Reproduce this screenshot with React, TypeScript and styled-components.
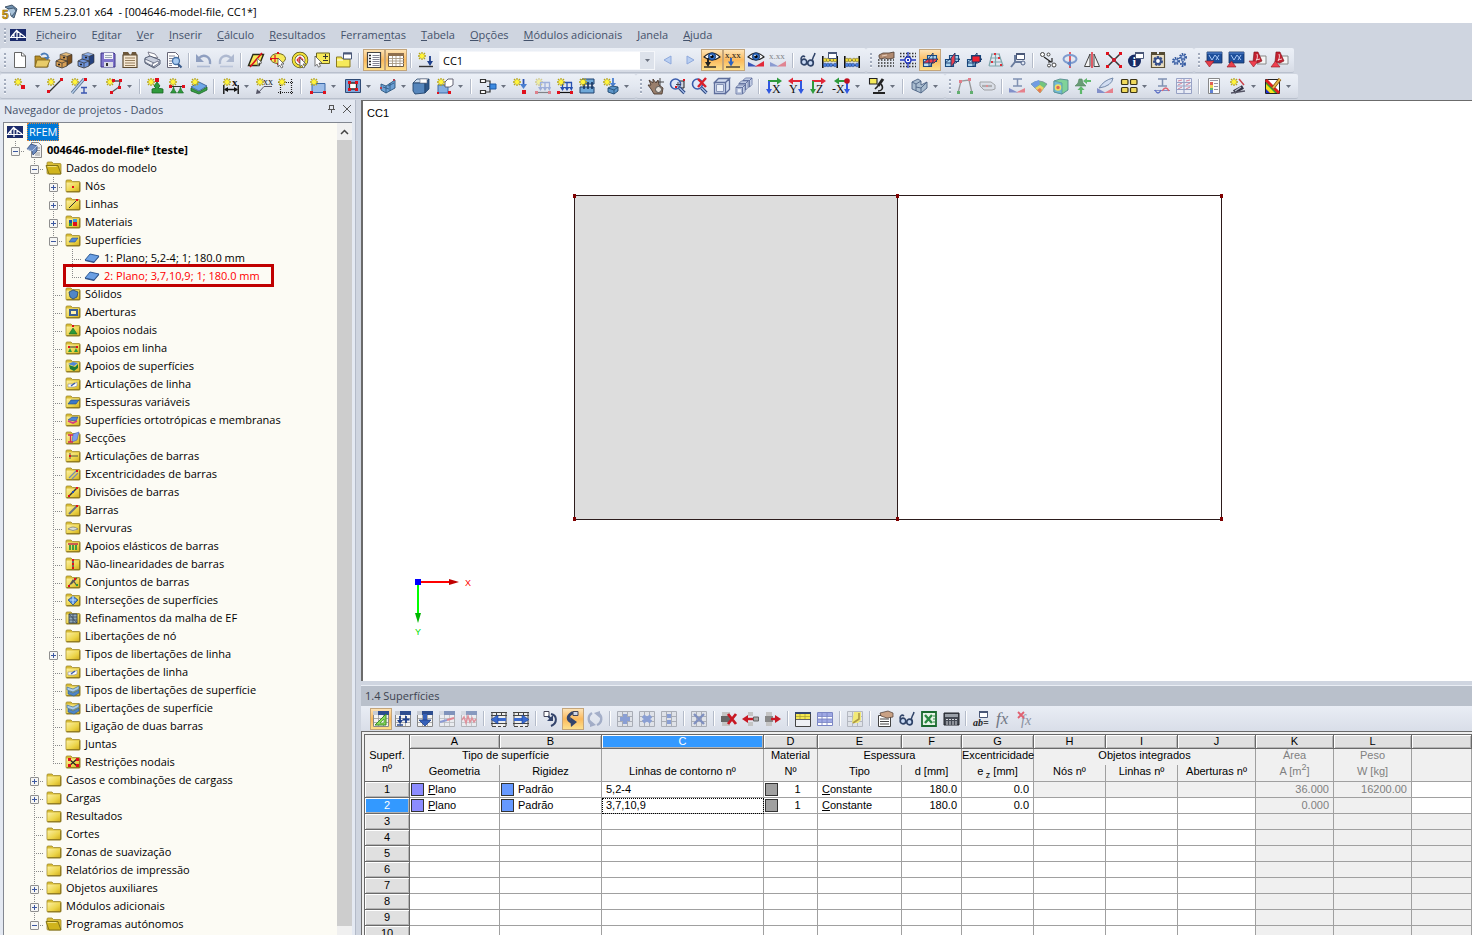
import React, { ReactNode } from 'react';
import styled, { createGlobalStyle, css } from 'styled-components';

const UI_FONT = '"Open Sans", "Noto Sans", sans-serif';
const GRID_FONT = '"Liberation Sans", Arial, sans-serif';
const SERIF = '"Liberation Serif", serif';

const GlobalStyle = createGlobalStyle`
  *, *::before, *::after { box-sizing: border-box; }
  body { margin: 0; background: #cfd5e0; font-family: ${UI_FONT}; font-size: 11px; color: #000; }
  button, select { font: inherit; color: inherit; }
`;

/* ---------- drawing helpers for the 16 x 16 icons ---------- */

const RED = '#e0101c';
const NAVY = '#1d3f8c';
const BLUE = '#4a7fd0';
const GREEN = '#2f9a3c';
const YEL = '#f6ea5a';

const s = (d: string, stroke = '#333', w = 1, fill = 'none') => (
  <path d={d} stroke={stroke} strokeWidth={w} fill={fill} />
);
const f = (d: string, fill: string, stroke = 'none', w = 1) => (
  <path d={d} fill={fill} stroke={stroke} strokeWidth={w} />
);
const dot = (x: number, y: number, c = RED, r = 3) => (
  <rect x={x} y={y} width={r} height={r} fill={c} />
);
const star = (
  <g>
    <path d="M4 0v8M0 4h8M1 1l6 6M7 1L1 7" stroke="#b8a814" strokeWidth="1.3" />
    <circle cx="4" cy="4" r="2.2" fill="#fff43c" />
  </g>
);
const cursor = <path d="M8 6l6 6h-3l2 3-1.500 1-2-3-1.500 2z" fill="#fff" stroke="#555" strokeWidth=".8" />;
const sheet = (
  <g>
    <path d="M.5 1.500h15v14H.5z" fill="#f4f4f4" stroke="#888" />
    <path d="M0 0h5v4H0z" fill="#c8ccd4" />
    <path d="M5 0h11v4H5z" fill="#2d4d8f" />
    <path d="M1 7.500h14M1 11.500h14M5.500 4v11M10.500 4v11" stroke="#999" strokeWidth=".8" />
  </g>
);
const grayGrid = (
  <path d="M.5.500h15v15H.5zM1 5.500h14M1 10.500h14M5.500 1v14M10.500 1v14" fill="#dfe2e8" stroke="#a9adb6" />
);
const cabinet = (top: string, front: string, side: string, drawer: string) => (
  <g>
    {f('M4 2.500l6-2 6 2-5 2z', top, '#555', 0.6)}
    {f('M11 4.500l5-2v8l-5 3z', side, '#333', 0.6)}
    {f('M4 2.500l7 2v9l-7-3z', front, '#555', 0.6)}
    {f('M0 9l4-2 7 2v5l-5 2-6-2z', drawer, '#333', 0.8)}
    {s('M0 9l6 2 5-2M6 11v4.500', '#333', 0.7)}
    {s('M2 12.500h2M7 5.500h2', '#222', 1.3)}
  </g>
);
const axes = (a: string, b: string, flip: boolean, letter: string) => (
  <g>
    {flip ? s('M14 3H3', a, 2) : s('M2 3h11', a, 2)}
    {flip ? f('M0 3l5-3.500v7z', a) : f('M16 3l-5-3.500v7z', a)}
    {flip ? s('M13 3v9', b, 2) : s('M3 3v9', b, 2)}
    {flip ? f('M13 16l-3-5h6z', b) : f('M3 16L0 11h6z', b)}
    <text x={flip ? (letter.length > 1 ? -2 : 1) : 6} y="15" fontFamily={SERIF} fontSize="12" fill="#111">{letter}</text>
  </g>
);
const glasses = (
  <g>
    <circle cx="4" cy="10" r="2.800" fill="#c9daf5" stroke="#2f4368" strokeWidth="1.700" />
    <circle cx="10.500" cy="11" r="2.800" fill="#c9daf5" stroke="#2f4368" strokeWidth="1.700" />
    {s('M1.500 9C0 5 3 3 5 5M13 10C11 6 14 6 15 1', '#2f4368', 1.500)}
  </g>
);
const eye = (
  <g>
    {f('M0 5Q8-3 16 5Q8 11 0 5z', '#fff', '#222', 1.100)}
    <circle cx="8" cy="4.500" r="3.700" fill="#2f6cc4" stroke="#12305f" strokeWidth=".8" />
    <circle cx="8" cy="4.500" r="1.600" fill="#000" />
    <circle cx="7" cy="3.500" r=".8" fill="#fff" />
  </g>
);
const wedge = (
  <g>
    {f('M0 10l9 4.500H0z', '#3a56b8')}
    {f('M16 9v5.500H7z', '#e2293a')}
  </g>
);
const planeBox = (front: string, flat: string, side: string) => (
  <g>
    {f('M5.500 3.500h9v6h-9z', '#a8d4f0', '#1b4b80', 1.100)}
    {f('M1.500 7.500h8v7h-8z', front, '#1b4b80', 1.100)}
    {f('M1 11l5-4h10l-4 4z', flat, '#17386b', 0.900)}
    {f('M7 6l4-5v9l-4 5z', side, '#17386b', 0.900)}
  </g>
);
const abacus = (
  <g>
    {s('M.8 4v12M15.200 4v12', '#111', 1.600)}
    {s('M1 8.500h14M1 13.500h14', '#333', 1)}
    {[3, 6, 10, 13].map((x) => <circle key={x} cx={x} cy="8" r="1.800" fill="#f0dc3c" stroke="#6b5f10" strokeWidth=".5" />)}
    {[3, 6, 9].map((x) => <circle key={x} cx={x} cy="13" r="1.800" fill="#4a7fe0" stroke="#1c3f80" strokeWidth=".5" />)}
    <circle cx="13" cy="13" r="1.800" fill="#4a7fe0" stroke="#1c3f80" strokeWidth=".5" />
  </g>
);
const magnifier = (
  <g>
    <circle cx="5.500" cy="6" r="5" fill="#dfe9fa" stroke="#3a5cac" strokeWidth="1.600" />
    {s('M9.500 10l5 5', '#27427c', 3.200)}
    {s('M9.500 10l5 5', '#a8c0ec', 1.200)}
  </g>
);
const downLoads = (color: string) => (
  <g>
    {s('M5 4.500h10M5.500 4v7M10 4v7M14.500 4v7', color, 1.300)}
    {f('M5.500 13L3 9h5zM10 13L7.500 9h5zM14.500 13L12 9h4z', color)}
    {s('M1 14.500h14', '#111', 1.200)}
    {dot(0, 13)}
    {dot(13, 13)}
  </g>
);
const screen = (
  <g>
    {f('M1 0h15v11H1z', '#1d4f9c', '#16335f', 0.8)}
    {s('M3 3l3 5 3-5M9 3l4 5M13 3l-3 5', '#a7c7f6', 1)}
    {s('M1 1h15', '#5c8ad0')}
  </g>
);
const pdf = (
  <g>
    {f('M7 4h9v8H7z', '#f4f4f4', '#888')}
    {f('M4 0h4l4 9-4 2-5-1z', '#c42030', '#7b1018', 0.6)}
    {s('M6 9c1-2 2-4 1-7M6 8l4-1', '#fff', 0.8)}
  </g>
);
const window_ = (x: number, y: number) => (
  <g transform={`translate(${x} ${y})`}>
    {f('M.5.5h8v6h-8z', '#fff', '#4a5878')}
    {f('M0 0h9v2H0z', '#4a5878')}
  </g>
);
const section = s('M4 1h9M8.500 1v7M4 8h9', '#6f83a8', 1.500);
const cubeWire = (x: number, y: number, k: number) => (
  <g transform={`translate(${x} ${y}) scale(${k})`}>
    {f('M0 4h11v11H0zM0 4l4-4h11l-4 4zM11 15l4-4V0l-4 4z', '#d2dcf0', '#5e6e9c', 1.300)}
    {f('M2 6h7v7H2z', '#e8eef8', '#8794b8', 1)}
  </g>
);
const rowTable = (
  <g>
    {f('M1 1h14v15H1z', '#eee')}
    {s('M0 1.500h16M0 4.500h16M0 12.500h16M1 15.500h4M7 15.500h3M12 15.500h3M1 1v14M5.500 1v3M10.500 1v3M15 1v14', '#444')}
  </g>
);

const ICONS: Record<string, ReactNode> = {
  new: (<>{f('M2.500.5h7.500l3.500 3.500v11.500h-11z', '#fff', '#666')}{s('M9.500.5V4h4', '#666')}</>),
  open: (<>{f('M1 4h5l1 2h7v9H1z', '#b98f25', '#6d5412', 0.8)}{f('M3 8h13l-3 7H1z', '#e8cc6a', '#7b611a', 0.8)}{s('M7 3c3-3 7-1 7 2', '#4a7db8', 1.8)}{f('M10 5h6l-3 3z', '#4a7db8')}</>),
  cabBrown: cabinet('#e3bb7a', '#c8924a', '#7a4e1c', '#d79f55'),
  cabBlue: cabinet('#8fb0ea', '#5d85cf', '#24407e', '#6f95dc'),
  save: (<>{f('M1 1h13l1 1v13H1z', '#8075cc', '#3f3688')}{f('M4 1h9v6H4z', '#f3f3fa')}{f('M4 10h9v5H4z', '#dcdce8')}{f('M6 11h2v3H6z', '#333')}{s('M5 3.500h7M5 5.500h7', '#9aa8b0')}</>),
  clip: (<>{f('M1 3h14v12.500H1z', '#f6e8d2', '#5c4a30', 1.2)}{f('M1 0h5l2 3H1zM10 0h4l1 3h-6z', '#6b563a')}{s('M3 6h10M3 8.500h10M3 11h10M3 13.500h10', '#8b7350', 0.9)}</>),
  print: (<>{f('M4 0l7 2 3 4-8-1z', '#fff', '#667', 0.8)}{f('M1 6l5-2 10 4v4l-6 4-9-5z', '#c9cfdd', '#454f66', 0.9)}{f('M1 7l9 4v4l-9-5z', '#eef0f6', '#454f66', 0.7)}{f('M8 12l6-3 1 2-6 4z', '#fff', '#59617a', 0.8)}</>),
  preview: (<>{f('M1.500.5h8l3 3v12h-11z', '#fff', '#667')}{s('M3 4h6M3 6.500h4M3 9h3M3 11.500h3M3 13.500h3', '#778', 0.9)}<circle cx="10" cy="9" r="3.500" fill="#a9ccf2" stroke="#4672a8" strokeWidth="1.300" />{s('M12 12l3.500 3.500', '#3a5c8c', 2.2)}</>),
  undo: (<>{s('M3 6c5-5 12-1 11 6', '#8f9fc0', 2.4)}{f('M0 2v8h8z', '#8f9fc0')}{s('M1 14.500h13', '#b0bcd4', 1.6)}</>),
  redo: (<>{s('M13 6C8 1 1 5 2 12', '#aeb9d0', 2.4)}{f('M16 2v8H8z', '#aeb9d0')}{s('M2 14.500h13', '#bcc6da', 1.6)}</>),
  selPoly: (<>{f('M5 2.500h10.500l-4.500 11H.5z', YEL, '#2a2a18', 1.4)}{s('M2 15L14 1', RED, 1.6)}{f('M9 6l5 5h-3l-1 3z', '#fff', '#666', 0.7)}</>),
  selEllipse: (<><ellipse cx="8" cy="6.500" rx="7.500" ry="5" fill={YEL} stroke="#6b6420" />{s('M5 3v7M2 6.500h6', RED, 1.2)}{dot(7, 0, RED, 2)}{dot(0, 6, RED, 2)}{dot(7, 11, RED, 2)}{cursor}</>),
  selCircle: (<><circle cx="8" cy="8" r="6.500" fill="#fff" stroke="#4f4a14" strokeWidth="3.500" /><circle cx="8" cy="8" r="6.500" fill="none" stroke="#f2e23c" strokeWidth="2.200" />{s('M8 4.500v7M4.500 8h7', RED, 1.2)}<circle cx="8" cy="8" r="2.500" fill="none" stroke={RED} />{cursor}</>),
  selPm: (<>{f('M2.500 1h13v10.500h-13z', YEL, '#6b6420')}{s('M11.500 2v5M9 4.500h5M9 8.500h5', '#333')}{f('M1 4l7 7-3 .2 1.500 3-2 1-1.500-3-2 2z', '#fff', '#555', 0.8)}</>),
  selWin: (<>{f('M.5 5h5l1 2h7.500v8H.5z', YEL, '#8b7b20')}{s('M1 8h6', '#fff')}{window_(7, 0.5)}</>),
  list: (<>{f('M1.500.5h13v15h-13z', '#fff', '#444', 1.2)}{s('M3 3.500h2M3 6.500h2M3 9.500h2M3 12.500h2', '#222', 1.5)}{s('M6.500 3.500h7M6.500 5.500h7M6.500 7.500h7M6.500 9.500h7M6.500 11.500h7M6.500 13.500h7', '#778', 0.9)}</>),
  tableview: (<>{f('M.5 1.500h15v13H.5z', '#fff', '#6b5a44')}{f('M0 1h16v3H0z', '#8e6f4e')}{s('M1 6.500h15M1 9h15M1 11.500h15M4.500 4v10M8 4v10M12 4v10', '#a89a86', 0.9)}</>),
  newLoad: (<g>{star}{s('M12 4v6', NAVY, 1.8)}{f('M12 14l-3-5h6z', NAVY)}{s('M1 14.500h14', '#333', 1.4)}</g>),
  prev: f('M11 4v8L4 8z', '#b9cff2', '#8fa9dc'),
  next: f('M5 4v8l7-4z', '#b9cff2', '#8fa9dc'),
  eyeLoad: (<>{eye}{s('M4 6v6', '#222', 2)}{f('M4 15L1 10h6z', '#222')}{s('M0 15h12', '#222', 1.4)}</>),
  xxxLoad: (<><text x="-1" y="6" fontSize="9" fontFamily={SERIF} fill="#111">x.xx</text>{s('M5 6v5', '#2f62c0', 2)}{f('M5 14.500l-3-5h6z', '#2f62c0')}{s('M0 15h14', '#222', 1.200)}</>),
  eyeWedge: (<>{eye}{wedge}</>),
  xxxWedge: (<g opacity=".5"><text x="-1" y="7" fontSize="9" fontFamily={SERIF} fill="#111">x.xx</text>{wedge}</g>),
  glasses,
  abacusWin: (<>{abacus}{window_(6, 0)}</>),
  abacus,
  handGrid: (
    <>
      <path d="M0 8h16M0 11h16M0 14h16" stroke="#333" strokeWidth="1.500" strokeDasharray="1.500 1.500" />
      {f('M1 3l4-2 6 0 5-1v6l-6 1-3-1-5 1-1-2z', '#b08a70', '#4b3a30', 0.8)}
      {s('M4 4l5-1', '#e8cdb8', 1.2)}
    </>
  ),
  gridCross: (
    <>
      <path d="M0 1.500h16M0 4.500h16M0 11.500h16M0 14.500h16" stroke="#333" strokeWidth="1.500" strokeDasharray="1.500 1.500" />
      {s('M8 0v16M0 8h16', '#2438c0', 1.3)}
      <circle cx="8" cy="8" r="3" fill="#fff" stroke="#2438c0" strokeWidth="1.300" />
      {dot(7, 7, '#2438c0', 2)}
    </>
  ),
  planeXY: planeBox('#bfe0f5', '#f0384a', 'none'),
  planeYZ: planeBox('#a8d4f0', 'none', '#e84050'),
  planeXZ: (<>{planeBox('#a8d4f0', 'none', 'none')}{f('M6 4h8v6H6z', '#f02030', '#17386b', 0.9)}</>),
  trapGrid: (<>{s('M3 2h9M2 6h11M1.500 10h12M1 14h14M4 2L1 14M7.500 2v12M11 2l4 12', '#7fa6ac', 1.2)}{dot(6, 1, '#d8303a', 2)}{dot(10, 5, '#d8303a', 2)}{dot(3, 9, '#d8303a', 2)}{dot(12, 12, '#d8303a', 2)}</>),
  viewTool: (<>{s('M5 3v7h8M5 10L1 15', '#6a7c9e', 2)}<circle cx="13" cy="11" r="2" fill="#dfe6f2" stroke="#516389" />{window_(6, 1)}</>),
  copyNode: (<><circle cx="2.500" cy="2.500" r="2" fill="#fff" stroke="#444" /><circle cx="8.500" cy="2.500" r="1.500" fill="#fff" stroke="#444" /><circle cx="14" cy="13" r="2" fill="#fff" stroke="#444" /><circle cx="9" cy="13.500" r="1.500" fill="#fff" stroke="#444" />{s('M4 5l7 5M8 10h4V6', '#222', 1.2)}</>),
  rotate: (<>{s('M8 0v16', RED, 1.3)}<ellipse cx="8" cy="7" rx="6.500" ry="4" fill="none" stroke="#7f9ccf" strokeWidth="2" />{f('M9 8v7l-4-3.500z', '#5d82c4')}</>),
  mirror: (<>{s('M8 0v16', RED, 1.3)}{f('M.5 14.500h5.500V2z', '#f4f4f4', '#444')}{f('M15.500 14.500H10V2z', '#f4f4f4', '#444')}</>),
  moveX: (<>{s('M2 2l12 12M14 2L2 14', '#333', 1.5)}{dot(0, 0)}{dot(13, 0)}{dot(0, 13)}{dot(13, 13)}{dot(6, 6, '#c02030', 4)}</>),
  info: (<><circle cx="6.500" cy="9" r="6.500" fill="#182c66" /><text x="4.500" y="14" fontSize="13" fontWeight="bold" fontFamily={SERIF} fill="#fff">i</text>{window_(7, 0)}</>),
  gearWin: (<>{f('M1.500 2.500h13v13h-13z', '#e9dfc4', '#5d5238', 1.2)}{f('M1 0h6v3H1zM9 0h6v3H9z', '#544b34')}<circle cx="8" cy="9" r="3.500" fill="none" stroke="#344d88" strokeWidth="3" strokeDasharray="2 1" /><circle cx="8" cy="9" r="2.800" fill="#fff" stroke="#344d88" strokeWidth="1.800" /></>),
  gears: (<>{[[4, 9, 3], [11, 5, 3], [11, 12, 2]].map(([x, y, r]) => <g key={x * y}><circle cx={x} cy={y} r={r} fill="none" stroke="#345aa0" strokeWidth="2" strokeDasharray="1.500 1" /><circle cx={x} cy={y} r={r - 1} fill="#b8ccf0" stroke="#345aa0" /></g>)}</>),
  screenDown: (<>{screen}{f('M-1 9h9l-4.500 6z', '#e8404c', '#8c1a22', 0.6)}</>),
  screenUp: (<>{screen}{f('M-1 15h9L3.500 9z', '#e8404c', '#8c1a22', 0.6)}</>),
  pdfDown: (<>{pdf}{f('M-1 9h9l-4.500 6z', '#f04050', '#8c1a22', 0.6)}</>),
  pdfUp: (<>{pdf}{f('M-1 15h9L3.500 9z', '#f04050', '#8c1a22', 0.6)}</>),

  node: (<>{star}{dot(7, 7, RED, 4)}</>),
  line: (<>{star}{s('M2 14L14 2', '#333', 1.3)}{dot(0, 12)}{dot(13, 0)}</>),
  member: (<>{star}{s('M1 15L13 1', '#56708f', 3)}{s('M1 15L13 1', '#b4cbe8', 1.4)}{dot(13, 0)}{s('M10 9.500h6M13 9v6M10 15h6', '#3a56b0', 1.4)}</>),
  polyline: (<>{star}{s('M6 3h8l-1 6-7 5', '#555', 1.3)}{dot(6, 1)}{dot(13, 1)}{dot(12, 8)}{dot(4, 13)}</>),
  nodalSupport: (<>{star}{dot(8, 0, RED, 4)}{f('M10 4l3 4-2 2 5 1v4H5v-4l4-1-2-2z', GREEN, '#176422', 0.8)}</>),
  lineSupport: (<>{star}{s('M2 8.500h12', '#333')}{dot(0, 7)}{dot(13, 7)}{f('M4.500 9l1 3 2 3h-6l2-3zM11.500 9l1 3 2 3h-6l2-3z', GREEN, '#176422', 0.6)}</>),
  surfaceSupport: (<>{f('M0 9l8-5 8 4-8 5z', '#6fa8e8', '#2c558e', 0.8)}{f('M0 10l8 4 8-5v3l-8 4-8-3z', '#37a045', '#176422', 0.8)}{star}</>),
  dimension: (<>{s('M.8 7v9M15.200 7v9M2 11.500h12', '#111', 1.4)}{f('M1 11.500l4-2.500v5zM15 11.500l-4-2.500v5z', '#111')}<text x="9" y="8" fontSize="11" fontWeight="bold" fontFamily={SERIF} fill="#111">x</text>{star}</>),
  comment: (<>{s('M2 15L8 8.500h8', '#556')}{f('M0 16l1-5 4 4z', '#556')}<text x="7" y="7" fontSize="10" fontFamily={SERIF} fill="#222">xx</text>{star}</>),
  guide: (<><path d="M2.500 3v13M13.500 1v15M0 4.500h16M0 14.500h16" stroke="#222" strokeWidth="1.200" strokeDasharray="1 1" />{star}</>),
  surface: (<>{f('M2 5.500h13v9H2z', '#9dbde8', '#3b69a8')}{star}{dot(0, 13)}{dot(13, 13)}</>),
  opening: (<>{f('M.5 1.500h15v13H.5z', '#7da4d8', '#2f4b76')}{f('M4.500 5h7v6h-7z', '#fff', '#333', 1.300)}{dot(3, 3)}{dot(10, 3)}{dot(3, 10)}{dot(10, 10)}</>),
  thickSurf: (<>{f('M1 6l5 2 9-6v8l-9 5-5-3z', '#6da0d4', '#2a567e', 0.9)}{s('M6 8v7M10 5v8M3 9l6 2M8 8l6-3', '#2a567e', 0.8)}{dot(0, 9, '#b04050', 2)}{dot(13, 1, '#b04050', 2)}</>),
  solid: (<>{f('M0 5l4-4h12l-3 4z', '#cfdff0', '#2a4468', 0.8)}{f('M0 5h12v10l-10 1-2-3z', '#5686bc', '#22456e', 0.9)}{f('M12 5l4-4v10l-4 4z', '#2f5788', '#22456e', 0.8)}{f('M7 1h7v4H7z', '#fff', '#778', 0.6)}</>),
  solidNew: (<>{f('M1 7h10v8H1z', '#86afe0', '#3b69a8')}{f('M8 4l3-3h5v6l-3 2H8z', '#fff', '#556', 0.9)}{star}{dot(0, 14, RED, 2)}{dot(11, 13)}</>),
  hierarchy: (<>{f('M.5 1.500h5v3h-5zM.5 12.500h5v3h-5z', '#fff', '#333', 1.200)}{s('M6 3h4v11H6M7 8.500h3', '#333', 1.200)}{f('M10 6h6v5h-6z', '#3c8ae0', '#1d5aa8')}</>),
  loadNode: (<>{star}{s('M10.500 1v7', '#2850b0', 1.8)}{f('M10.500 11L7 6h7z', BLUE)}{dot(9, 12, RED, 4)}</>),
  loadMember: (<g opacity=".45">{star}{downLoads('#4a6cc0')}</g>),
  loadLine: (<>{downLoads('#2850b0')}{star}</>),
  loadSurface: (<>{f('M3 1h12v5H3zM1 9h14v6H1z', '#6fa8d8', '#1e406f')}{s('M5 4v7M9 4v7M13 4v7', '#16335f', 1.6)}{star}</>),
  loadFree: (<>{star}{s('M10 0v6', BLUE, 1.8)}{f('M10 9L7 5h6z', BLUE)}{f('M5 10l4-2 6 1v4l-4 3-6-2z', '#5b94c8', '#1f4a70', 0.9)}{s('M5 10l6 2 4-3M11 12v4', '#1f4a70', 0.8)}</>),
  pan: (<>{s('M12 0v8M8 4h8', '#444')}{f('M1 2l4 3 0-4 3 4 2-3 1 5 4 3-1 6H6L3 11 0 7l3 0z', '#9a7f6c', '#4b3a30', 0.9)}<circle cx="10.500" cy="11.500" r="3" fill="#e6e0d8" stroke="#555" /></>),
  zoomWin: (<>{s('M6 3h8v7H6z', '#222', 1, '#cfd4e0')}{magnifier}{s('M8 4v5M6 6.500h5', '#445')}{dot(13, 1, RED, 2)}{dot(5, 8, RED, 2)}</>),
  zoomX: (<>{magnifier}{s('M6 1l8 8M14 0L6 9', '#d8202c', 2.4)}</>),
  wire1: cubeWire(0.5, 0.5, 1),
  wire2: (<>{cubeWire(7, 0, 0.6)}{cubeWire(3, 3, 0.6)}{cubeWire(0, 7, 0.6)}</>),
  axX: axes(GREEN, '#3058e0', false, 'X'),
  axY: axes('#e02838', '#3058e0', true, 'Y'),
  axZ: axes('#e02838', GREEN, false, 'Z'),
  axMX: (<>{axes(GREEN, '#3058e0', true, '-X')}<circle cx="13" cy="3" r="2.800" fill="#c01020" /></>),
  micro: (<>{s('M14 1L9 8', '#222', 3)}{s('M9 8l-3 3M12 6c3 4 1 7-3 7', '#222', 1.6)}{s('M4 15h12', '#222', 2)}{f('M.5.500h7.500v5.500H.5z', YEL, '#222', 1.100)}</>),
  viewSolid: (<>{f('M0 4l6-3 3 2v4l6-3v6l-6 5-9-4z', '#a9bccf', '#4d6384', 0.9)}{s('M0 4l4 2v7M4 6l5-3M9 15v-5l6-6M9 10L4 9', '#4d6384', 0.9)}</>),
  frame: (<g opacity=".7">{s('M1 15L4 3l8-1 3 13', '#777', 1.300)}{dot(2, 2, '#e05060')}{dot(11, 0, '#e05060')}{dot(0, 13, GREEN)}{dot(13, 13, GREEN)}</g>),
  tube: (<g opacity=".6">{f('M1 4h11l4 3v4l-3 1H5L1 8z', '#d5dae2', '#777')}{s('M3 8h10', '#888', 2.200)}{dot(7, 7, '#d55', 2)}</g>),
  secWedge: (<g opacity=".85">{section}{f('M0 10l9 4.500H0z', '#7382c4')}{f('M16 10v4.500H7z', '#e8707c')}</g>),
  plateColor: (<g opacity=".85">{f('M0 6Q8 0 16 6l-7 9z', '#5fbf6a', '#5a7a86', 0.7)}{f('M0 6q4-3 8-4l1 4-5 4z', '#5f8fe0')}{f('M4 10l5-3 4 3-4 5z', '#f0d04c')}{f('M6 12l3-2 2 2-2 3z', '#e8683c')}</g>),
  cubeColor: (<g opacity=".85">{f('M1 3l6-2 8 1v10l-6 4-8-2z', '#6fcf8a', '#3b7a80', 0.9)}{f('M1 3l8 2v11l-8-2z', '#5fb4d0', '#3b7a80', 0.6)}<circle cx="5" cy="9.500" r="2.500" fill="#e0503c" stroke="#f4e04c" strokeWidth="1.500" /></g>),
  supArrows: (<g opacity=".8">{f('M4 1h3l1 4 3 3H0l3-3z', '#4a8a58', '#2f6a3c', 0.6)}{s('M11 3h5M6 11v5', '#3fae4c', 2.200)}{f('M6 8l-3.500 4h7zM8 3l4-3v6z', '#3fae4c')}</g>),
  blade: (<g opacity=".85">{f('M2 10Q7 2 16 0q-1 8-14 10z', '#cfdcf2', '#5f789e')}{f('M0 10l9 5H0z', '#7382c4')}{f('M16 10v5H7z', '#e8707c')}</g>),
  four: (<>{[[0, 1], [9, 1], [0, 9], [9, 9]].map(([x, y]) => <g key={x + y * 20}><rect x={x + 0.5} y={y + 0.5} width="6.500" height="5" rx="1" fill="#f0da5c" stroke="#3b3414" strokeWidth="1.200" /></g>)}</>),
  secWave: (<g opacity=".85">{section}{s('M0 12.500h16', '#7382c4', 1)}{s('M1 12q3 6 6 0', '#4a5fc0', 1.3)}{s('M8 13q4-6 7 0', '#e0505c', 1.3)}</g>),
  tableSec: (<g opacity=".7">{f('M.5.500h15v15H.5z', '#eef0fa', '#7a86b4')}{s('M1 4.500h14M1 8h14M1 11.500h14M8 1v14', '#7a86b4', 1.2)}{s('M2 3l4-1M10 3l4-1M2 7l4-2M10 7l4-2M2 11l4-2M10 11l4-2', '#d05a78')}</g>),
  legend: (<g opacity=".85">{f('M2.500.5h11v15h-11z', '#fff', '#777')}{s('M4 2.500h8M8 5.500h4M8 8.500h4M8 11.500h4', '#889')}{dot(4, 4, '#e04a3c')}{dot(4, 7, '#f0d23c')}{dot(4, 10, '#4fb45c')}{dot(4, 12, '#4a70d0')}</g>),
  wizard: (<>{s('M4 14l9-5', '#334', 4)}{s('M9 1l5 6', '#c84048', 1.4)}{s('M1 15l14-2', '#556', 1.4)}{s('M5 13l6-4', '#b8c0cc', 1.2)}{star}</>),
  colors: (<>{f('M.5 1.500h14v14H.5z', '#fff', '#222')}{f('M1 2l13 13H1z', '#30a030')}{f('M1 6l9 9H1z', '#f5e21a')}{f('M1 11l4 4H1z', '#2030d0')}{s('M1 2l13 13', '#e02020', 3)}{s('M8 10l7-9', '#7a5010', 3.4)}{s('M8 10l7-9', '#e8b848', 2)}</>),

  tEdit: (<>{sheet}{f('M2 14h11V3z', '#8edc5a', '#3a8a2a')}{f('M7 12h4V8z', '#fff', '#3a8a2a', 0.7)}</>),
  tAdd: (<>{sheet}{s('M5 5v6M11 5v7M7.500 8.500h7', NAVY, 1.8)}{f('M5 13L2 9h6z', NAVY)}{s('M2 14h6', NAVY, 1.4)}</>),
  tDown: (<>{sheet}{s('M8 3v7', '#3560b8', 4)}{f('M8 15L2 9h12z', '#3560b8', '#1d3f8c', 0.8)}</>),
  tRamp: (<g opacity=".55">{sheet}{s('M1 11l7-2', '#4a60c0', 2)}{s('M8 9l7-2', '#e03a48', 2)}</g>),
  tWave: (<g opacity=".5">{sheet}{s('M1 9l2-3 2 6 2-7 2 6 2-4 2 4 2-3', '#e0404c', 1.5)}</g>),
  tLeft: (<>{rowTable}{s('M5 8.500h10', '#3a6ad0', 3)}{f('M0 8.500l7-4.500v9z', '#3a6ad0', '#1d3f8c', 0.6)}</>),
  tRight: (<>{rowTable}{s('M1 8.500h10', '#3a6ad0', 3)}{f('M16 8.500L9 4v9z', '#3a6ad0', '#1d3f8c', 0.6)}</>),
  tHook1: (<>{f('M1 .5h5v5H1z', '#fff', '#445')}{s('M5 5l4 4M8 3c6 1 7 9 0 12', '#33446c', 2)}{f('M4 10h6V4z', '#33446c')}</>),
  tHook2: (<>{s('M12 2H7C2 5 2 9 7 11', '#33446c', 3)}{f('M5 6l7 5-6 5z', '#33446c')}{f('M8 .5h5v4H8z', '#cfd8ea', '#445')}</>),
  tHook3: (<g opacity=".45">{s('M5 2C0 5 1 12 6 14M11 2c5 3 4 10-1 12', '#5a6c9a', 2.4)}{f('M3 9l6 5-6 2zM13 7L7 2l6-2z', '#5a6c9a')}</g>),
  tPlus: (<>{grayGrid}{s('M8 3v10M3 8h10', '#8a9fd4', 4)}</>),
  tStar: (<>{grayGrid}{s('M4 5l8 6M12 5l-8 6', '#8a9fd4', 4)}</>),
  tColon: (<>{grayGrid}{dot(6, 3, '#8a9fd4', 4)}{dot(6, 9, '#8a9fd4', 4)}</>),
  tX: (<>{grayGrid}{s('M3 3l10 10M13 3L3 13', '#8090c0', 2.4)}</>),
  rowX: (<>{f('M1 1h8v4H1zM1 11h8v4H1z', '#c4c4c4')}{f('M0 5h10v6H0z', '#666')}{s('M7 3l8 10M15 3L7 13', '#c81824', 2.8)}</>),
  rowLeft: (<>{f('M5 1h5v4H5zM5 11h5v4H5z', '#c4c4c4')}{f('M10.500 6h5v4h-5z', '#aaa', '#666')}{s('M3 8h7', '#c81824', 2.400)}{f('M-1 8l6-4v8z', '#c81824')}</>),
  rowRight: (<>{f('M1 1h6v4H1zM1 11h6v4H1z', '#c4c4c4')}{f('M0 5h8v6H0z', '#888')}{s('M6 8h6', '#c81824', 2.400)}{f('M16 8l-6-4v8z', '#c81824')}</>),
  hdrYellow: (<>{f('M.5 1.500h15v14H.5z', '#eef0f4', '#444')}{f('M1 3h14v5H1z', '#f4e850')}{f('M0 1h16v2H0z', '#33446c')}{s('M1 5.500h14M5 3v5M10 3v5', '#a89c30', 0.7)}{s('M1 8.500h14', '#666')}</>),
  hdrBlue: (<>{f('M.5 1.500h15v13H.5z', '#fff', '#7a86c4')}{f('M1 2h14v3H1zM1 8h14v3H1z', '#9ea8e4')}{s('M5 2v12M10 2v12M1 5.500h14M1 8h14M1 11.500h14', '#7a86c4', 0.9)}</>),
  note: (<g opacity=".8">{grayGrid}{f('M7 1h7v8l-3 3H5z', YEL)}{s('M12 2v6l-6 4', '#a08818', 1.6)}</g>),
  props: (<>{f('M1.500 4.500h12v11h-12z', '#fff', '#444')}{s('M3 8h9M3 10.500h9M3 13h9', '#444')}{f('M3 2l8-2 5 2v4l-6 1-6-2z', '#c9a184', '#4b3a30', 0.7)}</>),
  excel: (<>{f('M1 1h14v14H1z', '#e8f4e8', '#1b6b30', 1.8)}{s('M4 4l7 8M11 4l-7 8', '#2a8a42', 2.4)}{s('M12 5h2M12 8h2M12 11h2', '#2a8a42')}</>),
  calc: (<>{f('M1 2h15v12H1z', '#454a54', '#22252b')}{f('M2 3h13v3H2z', '#9aa0a8')}{s('M3 8.500h11M3 11h11M3 13h11', '#d5d8de', 1.2)}<path d="M5.500 7v7M8.500 7v7M11.500 7v7" stroke="#454a54" /></>),
  abWin: (<>{window_(6, 0)}<text x="0" y="15" fontSize="10" fontWeight="bold" fontStyle="italic" fontFamily={SERIF} fill="#222">ab=</text></>),
  fx: (<text x="1" y="13" fontSize="17" fontStyle="italic" fontFamily={SERIF} fill="#707784">fx</text>),
  fxX: (<><text x="4" y="14" fontSize="14" fontStyle="italic" fontFamily={SERIF} fill="#8a90a0">fx</text>{s('M1 1l6 6M7 1L1 7', '#e06070', 1.8)}</>),
};

/* small marks drawn on the folders of the tree */
const MARKS: Record<string, ReactNode> = {
  node: dot(7, 8, RED, 2),
  line: (<>{s('M4 12l8-8', '#333')}{dot(11, 3, RED, 2)}</>),
  material: (<>{dot(4, 6, '#2050b0', 3)}{dot(8, 5, '#40a0d8', 4)}{dot(4, 9, GREEN, 3)}{dot(8, 8, RED, 4)}</>),
  surface: f('M4 10l3-4h6l-3 4z', '#4f86d8', '#2a4f8c', 0.6),
  solid: f('M4 6l4-2 5 2-1 5-4 2-3-2z', '#4f86c8', '#23456f', 0.8),
  opening: f('M5 6h7v5H5z', '#fff2b0', '#3c5f94', 2),
  support: (<>{dot(7, 3, RED, 2)}{f('M8 6l4 6H4z', '#2c9a3a', '#176422', 0.6)}</>),
  lineSup: (<>{s('M4 7h9', '#333')}{dot(3, 6, RED, 2)}{dot(11, 6, RED, 2)}{f('M5 8l2 4H3zM11 8l2 4H9z', GREEN)}</>),
  surfSup: (<>{f('M3 6l5-2 5 1-4 3z', '#4f86d8')}{f('M4 7l6 2 3-3v4l-4 3-4-2z', '#1f7a34')}</>),
  hinge: (<>{f('M3 8h6l3-2v4l-3 1H3z', '#fff', '#889', 0.6)}{s('M6 10l4-3', '#3a5cb0', 1.300)}</>),
  thick: f('M3 10l3-4h8l-3 4z', '#3c78c8', '#1f4a80', 0.6),
  ortho: (<>{f('M3 8l4-3h6l-2 4z', '#4f86d8', '#2a4f8c', 0.6)}{s('M3 9l5 2 4-2', '#d83a80', 1.6)}</>),
  section: (<>{f('M8 4l6-2-2 8-5 2z', '#7c9cf0', '#3a58b0', 0.500)}{s('M3 5h5M5.500 5v7M3 12h5', '#d02858', 1.3)}</>),
  memHinge: (<>{s('M5 8h8M5 5v6', '#554')}{dot(4, 7, RED, 2)}</>),
  ecc: (<>{s('M4 12l8-8M7 13l6-6', '#7a8ab0', 1.2)}{dot(11, 4, RED, 2)}</>),
  divide: (<>{s('M4 12l8-8', '#333', 1.5)}{dot(11, 3, RED, 2)}{dot(7, 7, '#2050c0', 2)}{dot(3, 11, RED, 2)}</>),
  bar: (<>{s('M4 12l8-8', '#6a7480', 2)}{dot(11, 3, RED, 2)}</>),
  rib: f('M3 9q5-4 10 0q-5 3-10 0z', '#d9dfd8', '#777', 0.7),
  elastic: (<>{s('M3 6h10', '#c03040', 1.5)}{s('M5 7v5M8 7v5M11 7v5', GREEN, 1.8)}</>),
  nonlin: (<>{s('M8 4v9', '#446', 1.5)}{dot(7, 3, RED, 2)}{dot(7, 7, RED, 2)}{dot(7, 11, RED, 2)}</>),
  set: (<>{s('M4 12l4-6 4 6M6 10l6-6', '#555', 1.2)}{dot(3, 11, RED, 2)}{dot(11, 10, GREEN, 2)}{dot(9, 4, RED, 2)}</>),
  intersect: (<>{f('M3 8l5-4 5 4-5 5z', '#4f86d8', '#1f4a80', 0.7)}{s('M8 4v8M5 8h6', '#bfe0ff', 1.2)}</>),
  mesh: (<>{f('M4 4h8v9H4z', '#8fa6b8', '#345', 0.9)}{s('M4 7h8M4 10h8M8 4v9M4 4l8 9', '#345', 0.7)}</>),
  release: (<>{f('M2 5l6 2 6-3v3l-6 3-6-2z', '#a9ccea', '#2a5c90', 0.6)}{f('M3 9l5 2 6-3v3l-5 3-6-2z', '#4f86c8', '#2a5c90', 0.6)}</>),
  restrict: (<>{s('M4 5l8 7M12 5l-8 7', '#222', 1.2)}{dot(3, 4)}{dot(11, 4)}{dot(3, 10)}{dot(11, 10)}</>),
};

const Svg = styled.svg.attrs({ width: 16, height: 16, viewBox: '0 0 16 16', 'aria-hidden': true })`
  display: block;
  flex: none;
  overflow: visible;
`;

/* gold shading shared by every folder of the tree */
const Shades = styled.svg`
  position: absolute;
`;
const FolderShade = () => (
  <Shades width="0" height="0" aria-hidden>
    <linearGradient id="gold" x1="0" y1="0" x2="1" y2="1">
      <stop offset="0" stopColor="#fbf0a4" />
      <stop offset=".6" stopColor="#ecd449" />
      <stop offset="1" stopColor="#d0ac1c" />
    </linearGradient>
  </Shades>
);
const FolderIcon = ({ mark, open }: { mark?: string; open?: boolean }) => (
  <Svg>
    <path d="M1 4V3q0-1 1-1h4l1.500 1.500H14q1 0 1 1V13q0 1-1 1H2q-1 0-1-1z" fill="#d9bd34" stroke="#a08a30" strokeWidth=".8" />
    {open ? (
      <>
        <path d="M0 5.500h12l3 8.500H3z" fill="#d0b41c" stroke="#7b6c14" strokeWidth=".9" />
        <path d="M1.500 6.500h9" stroke="#f0e07c" />
      </>
    ) : (
      <>
        <path d="M1.500 4.500h13v9h-13z" fill="url(#gold)" />
        <path d="M14.700 4.500v9.200H1.500" stroke="#7d6a1c" strokeWidth=".9" fill="none" />
      </>
    )}
    {mark ? MARKS[mark] : null}
  </Svg>
);
const SurfaceIcon = () => (
  <Svg><path d="M1 10l5-6 9 2-5 6z" fill="#6ba0e4" stroke="#24508c" strokeWidth=".9" /><path d="M1 10l9 2 5-6v1l-5 6-9-2z" fill="#2c4f86" /></Svg>
);
const ModelIcon = () => (
  <Svg><path d="M4.500.5h7l3 3v12h-10z" fill="#f0f0f0" stroke="#888" /><path d="M8 6h5M8 8.500h5M8 11h5M8 13h5" stroke="#999" /><path d="M0 7l4-5 6 2 0 5-4 4-1-4z" fill="#6d8cc0" stroke="#2f4a7c" strokeWidth=".8" /><path d="M0 7l5 2 5-5" stroke="#c2d2ec" strokeWidth=".8" fill="none" /></Svg>
);
const BridgeIcon = () => (
  <Svg><path d="M0 2h16v12H0z" fill="#1b2b6b" /><path d="M0 10.500h16M7 3v10M7 3L1 10M7 4l8 6M4 7v3M10 6v4" stroke="#fff" strokeWidth="1.200" fill="none" /></Svg>
);
const AppIcon = () => (
  <Svg><path d="M3 3l7-2 5 4-3 9-3-2-1-6z" fill="#6f8fae" stroke="#2a3f55" strokeWidth=".8" /><path d="M6 5l6-1 2 3-4 5" fill="#a9c3da" stroke="#2a3f55" strokeWidth=".7" /><text x="0" y="15" fontSize="12" fontWeight="bold" fontFamily={GRID_FONT} fill="#e8b010" stroke="#6b4c08" strokeWidth=".5">5</text></Svg>
);

/* ---------- window frame ---------- */

const Window = styled.div`
  display: flex;
  flex-direction: column;
  height: 100vh;
  overflow: hidden;
`;
const TitleBar = styled.header`
  display: flex;
  align-items: center;
  gap: 5px;
  height: 23px;
  flex: none;
  padding: 0 2px;
  background: #fff;
  white-space: pre;
`;
const MenuBar = styled.nav`
  display: flex;
  align-items: center;
  gap: 1px;
  height: 25px;
  flex: none;
  padding-bottom: 2px;
  background: #cfd5e0;
  color: #44526b;
`;
const MenuButton = styled.button`
  border: 0;
  padding: 0 7px;
  height: 22px;
  background: none;
  white-space: nowrap;
`;
const MenuIcon = styled.span`
  padding-right: 2px;
`;
const Grip = styled.span`
  flex: none;
  width: 9px;
  height: 16px;
  background: repeating-linear-gradient(#a2abbc 0 2px, #f6f8fb 2px 3px, transparent 3px 4px) 4px 1px / 2px 15px no-repeat;
`;
const ToolRow = styled.div`
  display: flex;
  flex: none;
  height: 26px;
`;
const ToolGroup = styled.div`
  display: flex;
  align-items: center;
  height: 25px;
  padding-right: 3px;
  border-radius: 2px;
  background: linear-gradient(#ecf0f7, #e3e8f1 50%, #d5dae4);
  border-bottom: 1px solid #b9c0cd;
`;
const ToolButton = styled.button<{ $on?: boolean }>`
  display: flex;
  align-items: center;
  justify-content: center;
  flex: none;
  width: 22px;
  height: 22px;
  padding: 0;
  border: 1px solid transparent;
  background: none;
  ${(p) => p.$on && css`
    border-color: #c4a57a;
    background: linear-gradient(#fde3b5, #fbb95c 50%, #fde08c);
  `}
`;
const SplitButton = styled(ToolButton)`
  width: 35px;
  padding-left: 4px;
  justify-content: flex-start;
  gap: 5px;
`;
const Separator = styled.span`
  flex: none;
  width: 8px;
  height: 15px;
  background: linear-gradient(90deg, #b4bbc9 1px, #fff 1px) 3px 0 / 2px 100% no-repeat;
`;
const ComboBox = styled.label`
  display: grid;
  width: 220px;
  padding: 0 2px;
  & > * { grid-area: 1 / 1; }
`;
const ComboSelect = styled.select`
  appearance: none;
  width: 100%;
  height: 19px;
  padding: 0 3px;
  border: 1px solid #f4f6fa;
  border-radius: 0;
  background: #fff;
`;
const ComboArrow = styled.span`
  justify-self: end;
  align-self: center;
  display: grid;
  place-items: center;
  width: 14px;
  height: 17px;
  margin-right: 1px;
  background: #dde2eb;
  pointer-events: none;
`;
const Arrow = () => (
  <svg width="5" height="3" aria-hidden><path d="M0 0h5L2.500 3z" fill="#6b7280" /></svg>
);

/* Tool lists: "|" is a separator, "*" marks a pressed tool, ">" a tool with a drop-down. */
const Tools = ({ names }: { names: string }) => (
  <>
    {names.split(' ').map((token, i) => {
      if (token === '|') return <Separator key={i} />;
      const name = token.replace(/[*>]/, '');
      const icon = <Svg>{ICONS[name]}</Svg>;
      return token.endsWith('>')
        ? <SplitButton key={i} aria-label={name}>{icon}<Arrow /></SplitButton>
        : <ToolButton key={i} aria-label={name} $on={token.endsWith('*')}>{icon}</ToolButton>;
    })}
  </>
);

/* ---------- navigator ---------- */

const Main = styled.main`
  display: flex;
  flex: 1;
  min-height: 0;
`;
const Navigator = styled.aside`
  display: flex;
  flex-direction: column;
  flex: none;
  width: 356px;
  background: #e4e9f2;
  border-right: 1px solid #b3bac8;
`;
const NavHeader = styled.div`
  display: flex;
  align-items: center;
  gap: 2px;
  height: 18px;
  flex: none;
  padding: 0 1px 0 4px;
  color: #44526b;
  span { flex: 1; }
`;
const TinyButton = styled.button`
  display: grid;
  place-items: center;
  width: 14px;
  height: 16px;
  padding: 0;
  border: 0;
  background: none;
`;
const TreeFrame = styled.div`
  display: flex;
  flex: 1;
  min-height: 0;
  margin: 4px 3px 0;
  border-top: 1px solid #828790;
  border-left: 1px solid #828790;
  background: #fcfbf4;
`;
const Tree = styled.ul`
  flex: 1;
  min-width: 0;
  margin: 0;
  padding: 0 0 0 2px;
  overflow: hidden;
  list-style: none;
`;
const TreeRow = styled.li`
  position: relative;
  display: flex;
  align-items: center;
  height: 18px;
  white-space: nowrap;
`;
const VERT = 'repeating-linear-gradient(#8a8a8a 0 1px, transparent 1px 2px)';
const HORZ = 'repeating-linear-gradient(90deg, #8a8a8a 0 1px, transparent 1px 2px) 9px 10px / 10px 1px no-repeat';
const Guide = styled.span<{ $kind: string }>`
  display: flex;
  flex: none;
  width: 19px;
  height: 18px;
  padding: 6px 0 0 5px;
  background: ${(p) => ({
    '.': 'none',
    I: `${VERT} 9px 0 / 1px 100% no-repeat`,
    T: `${VERT} 9px 0 / 1px 100% no-repeat, ${HORZ}`,
    L: `${VERT} 9px 0 / 1px 10px no-repeat, ${HORZ}`,
  } as Record<string, string>)[p.$kind]};
`;
const Expander = styled.button<{ $open: boolean }>`
  width: 9px;
  height: 9px;
  padding: 0;
  border: 1px solid #8f8f8f;
  border-radius: 1px;
  background:
    linear-gradient(#3c58a0, #3c58a0) center / 5px 1px no-repeat,
    ${(p) => (p.$open ? '' : 'linear-gradient(#3c58a0, #3c58a0) center / 1px 5px no-repeat,')}
    #f6f6f4;
`;
const IconCell = styled.span`
  flex: none;
  width: 22px;
  padding-left: 2px;
`;
const RootIconCell = styled.span`
  flex: none;
  width: 21px;
  padding-left: 1px;
`;
const Label = styled.span<{ $tone?: string }>`
  line-height: 18px;
  ${(p) => p.$tone === 'bold' && 'font-weight: 700;'}
  ${(p) => p.$tone === 'red' && 'color: #f00;'}
  ${(p) => p.$tone === 'root' && css`
    padding: 0 2px;
    outline: 1px dotted #e0883a;
    outline-offset: -1px;
    background: #0078d7;
    color: #fff;
  `}
`;
const RedFrame = styled.span`
  position: absolute;
  top: -3px;
  left: 57px;
  width: 211px;
  height: 23px;
  border: 3px solid #c00000;
`;
const ScrollTrack = styled.div`
  display: flex;
  flex-direction: column;
  flex: none;
  width: 15px;
  padding-bottom: 9px;
  background: #f0f0f0;
`;
const ScrollButton = styled(TinyButton)`
  width: 15px;
  height: 17px;
`;
const ScrollThumb = styled.div`
  flex: 1;
  background: #cdcdcd;
`;

type Node = { g: string; t: string; m?: string; x?: '+' | '-'; k?: string; tone?: string };
const sub = (t: string, m?: string, x?: '+' | '-', last?: boolean): Node => ({ g: last ? '.IL' : '.IT', t, m, x });
const top = (t: string, x?: '+' | '-'): Node => ({ g: '.T', t, x });

const TREE: Node[] = [
  { g: 'L', t: '004646-model-file* [teste]', x: '-', k: 'model', tone: 'bold' },
  { g: '.T', t: 'Dados do modelo', x: '-', k: 'open' },
  sub('Nós', 'node', '+'),
  sub('Linhas', 'line', '+'),
  sub('Materiais', 'material', '+'),
  sub('Superfícies', 'surface', '-'),
  { g: '.IIT', t: '1: Plano; 5,2-4; 1; 180.0 mm', k: 'surf' },
  { g: '.IIL', t: '2: Plano; 3,7,10,9; 1; 180.0 mm', k: 'surf', tone: 'red' },
  sub('Sólidos', 'solid'),
  sub('Aberturas', 'opening'),
  sub('Apoios nodais', 'support'),
  sub('Apoios em linha', 'lineSup'),
  sub('Apoios de superfícies', 'surfSup'),
  sub('Articulações de linha', 'hinge'),
  sub('Espessuras variáveis', 'thick'),
  sub('Superfícies ortotrópicas e membranas', 'ortho'),
  sub('Secções', 'section'),
  sub('Articulações de barras', 'memHinge'),
  sub('Excentricidades de barras', 'ecc'),
  sub('Divisões de barras', 'divide'),
  sub('Barras', 'bar'),
  sub('Nervuras', 'rib'),
  sub('Apoios elásticos de barras', 'elastic'),
  sub('Não-linearidades de barras', 'nonlin'),
  sub('Conjuntos de barras', 'set'),
  sub('Interseções de superfícies', 'intersect'),
  sub('Refinamentos da malha de EF', 'mesh'),
  sub('Libertações de nó'),
  sub('Tipos de libertações de linha', undefined, '+'),
  sub('Libertações de linha', 'hinge'),
  sub('Tipos de libertações de superfície', 'release'),
  sub('Libertações de superfície', 'release'),
  sub('Ligação de duas barras'),
  sub('Juntas'),
  sub('Restrições nodais', 'restrict', undefined, true),
  top('Casos e combinações de cargass', '+'),
  top('Cargas', '+'),
  top('Resultados'),
  top('Cortes'),
  top('Zonas de suavização'),
  top('Relatórios de impressão'),
  top('Objetos auxiliares', '+'),
  top('Módulos adicionais', '+'),
  { g: '.L', t: 'Programas autónomos', x: '-', k: 'open' },
];

/* ---------- model view and table ---------- */

const Work = styled.section`
  display: flex;
  flex-direction: column;
  flex: 1;
  min-width: 0;
  padding-left: 5px;
`;
const ModelView = styled.div`
  display: flex;
  flex: 1;
  min-height: 0;
  border: solid #6b6b6b;
  border-width: 1px 0 0 2px;
  background: #fff;
`;
const Drawing = styled.svg`
  flex: 1;
  font-family: ${GRID_FONT};
`;
const DataPanel = styled.section`
  display: flex;
  flex-direction: column;
  flex: none;
  height: 254px;
  padding-top: 4px;
  overflow: hidden;
`;
const PanelTitle = styled.h2`
  flex: none;
  height: 21px;
  margin: 0;
  padding-left: 4px;
  border-top: 1px solid #e9edf4;
  background: #b9c0cb;
  color: #3c4350;
  font-size: 11px;
  font-weight: 400;
  line-height: 19px;
`;
const PanelTools = styled.div`
  display: flex;
  align-items: center;
  flex: none;
  height: 25px;
  padding-left: 9px;
  background: linear-gradient(#e9edf5, #d9dee8);
`;
const GridFrame = styled.div`
  flex: 1;
  min-height: 0;
  overflow: hidden;
  padding: 2px 0 0 2px;
  border-top: 1px solid #6b6b6b;
  border-left: 1px solid #6b6b6b;
  background: #f0f0f0;
`;
const Grid = styled.table`
  width: 100%;
  table-layout: fixed;
  border-collapse: separate;
  border-spacing: 0;
  border-top: 1px solid #696969;
  border-left: 1px solid #696969;
  font-family: ${GRID_FONT};
  font-size: 11px;
  line-height: 13px;
  white-space: nowrap;
`;
const LetterCell = styled.th<{ $on?: boolean }>`
  height: 14px;
  padding: 0;
  border: solid #696969;
  border-width: 0 1px 1px 0;
  background: ${(p) => (p.$on ? '#3399ff' : '#e0e0e0')};
  color: ${(p) => (p.$on ? '#fff' : '#000')};
  box-shadow: inset 1px 1px #fff, inset -1px -1px #b4b4b4;
  font-weight: 400;
`;
const RowHead = styled(LetterCell)`
  height: 16px;
`;
const CornerCell = styled.th`
  padding: 8px 0 0;
  border: solid #696969;
  border-width: 0 1px 1px 0;
  background: #f0f0f0;
  font-weight: 400;
`;
const HeadCell = styled.th<{ $muted?: boolean; $low?: boolean }>`
  height: ${(p) => (p.$low ? 17 : 16)}px;
  padding: 0;
  vertical-align: top;
  border: solid #a0a0a0;
  border-width: ${(p) => (p.$low ? '0 1px 1px 0' : '0 1px 0 0')};
  background: #f0f0f0;
  color: ${(p) => (p.$muted ? '#808080' : '#000')};
  font-weight: 400;
  sub, sup { font-size: 9px; line-height: 1px; }
`;
const Cell = styled.td<{ $align?: string; $shade?: boolean; $focus?: boolean; $muted?: boolean }>`
  height: 16px;
  padding: 0 4px;
  border: solid #a0a0a0;
  border-width: 0 1px 1px 0;
  background: ${(p) => (p.$shade ? '#f0f0f0' : '#fff')};
  color: ${(p) => (p.$muted ? '#808080' : '#000')};
  text-align: ${(p) => p.$align || 'left'};
  ${(p) => p.$focus && 'outline: 1px dotted #000; outline-offset: -1px;'}
`;
const SwatchRow = styled.span`
  display: flex;
  align-items: center;
  gap: 4px;
  margin-left: -3px;
  height: 15px;
`;
const Swatch = styled.i<{ $color: string }>`
  flex: none;
  width: 13px;
  height: 13px;
  border: 1px solid #333;
  background: ${(p) => p.$color};
`;
const Centered = styled.span`
  flex: 1;
  text-align: center;
`;

const COLS = [45, 90, 102, 162, 54, 84, 60, 72, 72, 72, 78, 78, 78];
const Access = ({ text, at = 0 }: { text: string; at?: number }) => (
  <>{text.slice(0, at)}<u>{text[at]}</u>{text.slice(at + 1)}</>
);
const MENUS: [string, number][] = [
  ['Ficheiro', 0], ['Editar', 1], ['Ver', 0], ['Inserir', 0], ['Cálculo', 0], ['Resultados', 0],
  ['Ferramentas', 7], ['Tabela', 0], ['Opções', 0], ['Módulos adicionais', 0], ['Janela', 0], ['Ajuda', 0],
];
const ROWS = [
  { lines: '5,2-4', area: '36.000', weight: '16200.00' },
  { lines: '3,7,10,9', area: '0.000', weight: '' },
];

const ModelDrawing = () => (
  <Drawing role="img" aria-label="CC1">
    <text x="4" y="16" fontSize="11">CC1</text>
    <rect x="211.500" y="94.500" width="323" height="324" fill="#ddd" />
    <path d="M211.500 94.500h647v324h-647zM534.500 94.500v324" fill="none" stroke="#2c1c1c" />
    {[211, 534, 858].flatMap((x) => [95, 418].map((y) => (
      <rect key={`${x}-${y}`} x={x - 1} y={y - 2} width="3" height="4" fill="#800000" />
    )))}
    <path d="M55 481h34" stroke="#f00" strokeWidth="2" />
    <path d="M86 478l10 3-10 3z" fill="#c00000" />
    <path d="M55 482v32" stroke="#0f0" strokeWidth="2" />
    <path d="M52 512h6l-3 10z" fill="#00b400" />
    <rect x="52" y="478" width="6" height="6" fill="#00f" />
    <text x="102" y="485" fontSize="9" fill="#f00">X</text>
    <text x="52" y="534" fontSize="9" fill="#0d0">Y</text>
  </Drawing>
);

const SurfaceTable = () => (
  <Grid>
    <colgroup>{COLS.map((w, i) => <col key={i} style={{ width: w }} />)}<col /></colgroup>
    <thead>
      <tr>
        <CornerCell rowSpan={3}>Superf.<br />nº</CornerCell>
        {'ABCDEFGHIJKL'.split('').map((c) => <LetterCell key={c} $on={c === 'C'}>{c}</LetterCell>)}
        <LetterCell />
      </tr>
      <tr>
        <HeadCell colSpan={2}>Tipo de superfície</HeadCell>
        <HeadCell />
        <HeadCell>Material</HeadCell>
        <HeadCell colSpan={2}>Espessura</HeadCell>
        <HeadCell>Excentricidade</HeadCell>
        <HeadCell colSpan={3}>Objetos integrados</HeadCell>
        <HeadCell $muted>Área</HeadCell>
        <HeadCell $muted>Peso</HeadCell>
        <HeadCell />
      </tr>
      <tr>
        {['Geometria', 'Rigidez', 'Linhas de contorno nº', 'Nº', 'Tipo', 'd [mm]'].map((t) => <HeadCell key={t} $low>{t}</HeadCell>)}
        <HeadCell $low>e<sub> z</sub> [mm]</HeadCell>
        {['Nós nº', 'Linhas nº', 'Aberturas nº'].map((t) => <HeadCell key={t} $low>{t}</HeadCell>)}
        <HeadCell $low $muted>A [m<sup>2</sup>]</HeadCell>
        <HeadCell $low $muted>W [kg]</HeadCell>
        <HeadCell $low />
      </tr>
    </thead>
    <tbody>
      {ROWS.map((r, i) => (
        <tr key={i}>
          <RowHead $on={i === 1}>{i + 1}</RowHead>
          <Cell><SwatchRow><Swatch $color="#8c8cff" /><span><Access text="Plano" /></span></SwatchRow></Cell>
          <Cell><SwatchRow><Swatch $color="#6699ff" />Padrão</SwatchRow></Cell>
          <Cell $focus={i === 1}>{r.lines}</Cell>
          <Cell><SwatchRow><Swatch $color="#a0a0a0" /><Centered>1</Centered></SwatchRow></Cell>
          <Cell><Access text="Constante" /></Cell>
          <Cell $align="right">180.0</Cell>
          <Cell $align="right">0.0</Cell>
          <Cell $shade={i === 0} />
          <Cell $shade={i === 0} />
          <Cell $shade={i === 0} />
          <Cell $align="right" $shade $muted>{r.area}</Cell>
          <Cell $align="right" $shade $muted>{r.weight}</Cell>
          <Cell />
        </tr>
      ))}
      {[3, 4, 5, 6, 7, 8, 9, 10].map((n) => (
        <tr key={n}>
          <RowHead>{n}</RowHead>
          {COLS.map((_, i) => <Cell key={i} $shade={i > 9} />)}
        </tr>
      ))}
    </tbody>
  </Grid>
);

export default function App() {
  return (
    <Window>
      <GlobalStyle />
      <FolderShade />
      <TitleBar><AppIcon />{'RFEM 5.23.01 x64  - [004646-model-file, CC1*]'}</TitleBar>
      <MenuBar>
        <Grip />
        <MenuIcon><BridgeIcon /></MenuIcon>
        {MENUS.map(([t, at]) => <MenuButton key={t}><Access text={t} at={at} /></MenuButton>)}
      </MenuBar>
      <ToolRow>
        <ToolGroup>
          <Grip />
          <Tools names="new open cabBrown cabBlue save clip print preview | undo redo | selPoly selEllipse selCircle selPm selWin | list* tableview* | newLoad" />
          <ComboBox>
            <ComboSelect aria-label="Caso de carga"><option>CC1</option></ComboSelect>
            <ComboArrow><Arrow /></ComboArrow>
          </ComboBox>
          <Tools names="prev next eyeLoad* xxxLoad* eyeWedge xxxWedge | glasses abacusWin abacus" />
        </ToolGroup>
        <ToolGroup>
          <Grip />
          <Tools names="handGrid gridCross planeXY* planeYZ planeXZ trapGrid viewTool | copyNode rotate mirror moveX info gearWin gears" />
        </ToolGroup>
        <ToolGroup>
          <Grip />
          <Tools names="screenDown screenUp pdfDown pdfUp" />
        </ToolGroup>
      </ToolRow>
      <ToolRow>
        <ToolGroup>
          <Grip />
          <Tools names="node> line member> polyline> | nodalSupport lineSupport surfaceSupport | dimension> comment guide | surface> opening> thickSurf> solid solidNew> | hierarchy> loadNode loadMember loadLine loadSurface loadFree>" />
        </ToolGroup>
        <ToolGroup>
          <Grip />
          <Tools names="pan zoomWin zoomX wire1 wire2 | axX axY axZ axMX> micro> | viewSolid>" />
        </ToolGroup>
        <ToolGroup>
          <Grip />
          <Tools names="frame tube | secWedge plateColor cubeColor supArrows blade four> secWave tableSec | legend wizard> colors>" />
        </ToolGroup>
      </ToolRow>
      <Main>
        <Navigator>
          <NavHeader>
            <span>Navegador de projetos - Dados</span>
            <TinyButton aria-label="Fixar"><svg width="7" height="8" aria-hidden><path d="M1.500 0v4.500M5.500 0v4.500M1 .5h5M0 4.500h7M3.500 5v3" stroke="#555" fill="none" /></svg></TinyButton>
            <TinyButton aria-label="Fechar"><svg width="8" height="8" aria-hidden><path d="M0 0l8 8M8 0L0 8" stroke="#555" fill="none" /></svg></TinyButton>
          </NavHeader>
          <TreeFrame>
            <Tree>
              <TreeRow><RootIconCell><BridgeIcon /></RootIconCell><Label $tone="root">RFEM</Label></TreeRow>
              {TREE.map((n, i) => (
                <TreeRow key={i}>
                  {n.g.split('').map((k, j) => (
                    <Guide key={j} $kind={k}>
                      {n.x && j === n.g.length - 1 ? <Expander $open={n.x === '-'} aria-label={n.t} /> : null}
                    </Guide>
                  ))}
                  <IconCell>
                    {n.k === 'surf' ? <SurfaceIcon /> : n.k === 'model' ? <ModelIcon /> : <FolderIcon mark={n.m} open={n.k === 'open'} />}
                  </IconCell>
                  <Label $tone={n.tone}>{n.t}</Label>
                  {n.tone === 'red' ? <RedFrame /> : null}
                </TreeRow>
              ))}
            </Tree>
            <ScrollTrack>
              <ScrollButton aria-label="Subir"><svg width="9" height="6" aria-hidden><path d="M1 5l3.500-3.500L8 5" stroke="#444" strokeWidth="1.500" fill="none" /></svg></ScrollButton>
              <ScrollThumb />
            </ScrollTrack>
          </TreeFrame>
        </Navigator>
        <Work>
          <ModelView><ModelDrawing /></ModelView>
          <DataPanel>
            <PanelTitle>1.4 Superfícies</PanelTitle>
            <PanelTools>
              <Tools names="tEdit* tAdd tDown tRamp tWave | tLeft tRight | tHook1 tHook2* tHook3 | tPlus tStar tColon | tX | rowX rowLeft rowRight | hdrYellow hdrBlue | note | props glasses excel calc | abWin fx fxX" />
            </PanelTools>
            <GridFrame><SurfaceTable /></GridFrame>
          </DataPanel>
        </Work>
      </Main>
    </Window>
  );
}
